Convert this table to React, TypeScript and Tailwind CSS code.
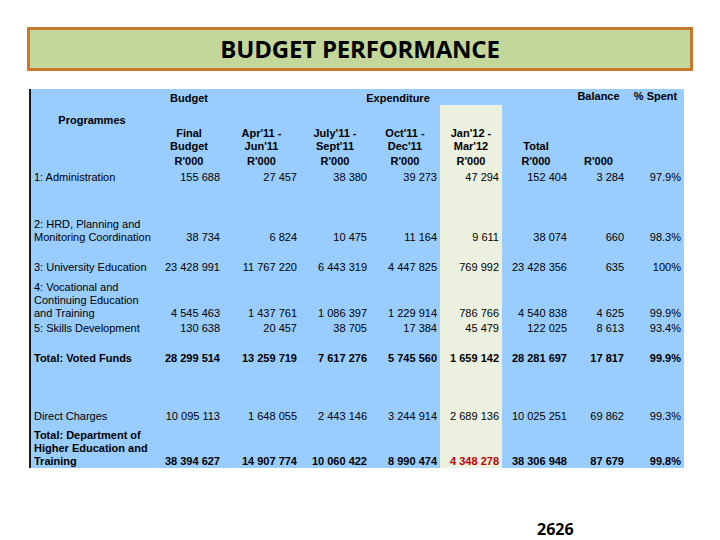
import React from "react";

type Row = {
  label: string[];
  vals: string[];
  pad: string;
  bold?: boolean;
  redCol?: number;
};

const cols = "grid grid-cols-[129px_63px_77px_70px_70px_62px_68px_57px_57px]";

const rows: Row[] = [
  { label: ["1: Administration"], vals: ["155 688", "27 457", "38 380", "39 273", "47 294", "152 404", "3 284", "97.9%"], pad: "pt-[3px]" },
  { label: ["2: HRD, Planning and", "Monitoring Coordination"], vals: ["38 734", "6 824", "10 475", "11 164", "9 611", "38 074", "660", "98.3%"], pad: "pt-[34px]" },
  { label: ["3: University Education"], vals: ["23 428 991", "11 767 220", "6 443 319", "4 447 825", "769 992", "23 428 356", "635", "100%"], pad: "pt-[17px]" },
  { label: ["4: Vocational and", "Continuing Education", "and Training"], vals: ["4 545 463", "1 437 761", "1 086 397", "1 229 914", "786 766", "4 540 838", "4 625", "99.9%"], pad: "pt-[7px]" },
  { label: ["5: Skills Development"], vals: ["130 638", "20 457", "38 705", "17 384", "45 479", "122 025", "8 613", "93.4%"], pad: "pt-[2px]" },
  { label: ["Total: Voted Funds"], vals: ["28 299 514", "13 259 719", "7 617 276", "5 745 560", "1 659 142", "28 281 697", "17 817", "99.9%"], pad: "pt-[17px]", bold: true },
  { label: ["Direct Charges"], vals: ["10 095 113", "1 648 055", "2 443 146", "3 244 914", "2 689 136", "10 025 251", "69 862", "99.3%"], pad: "pt-[45px]" },
  { label: ["Total: Department of", "Higher Education and", "Training"], vals: ["38 394 627", "14 907 774", "10 060 422", "8 990 474", "4 348 278", "38 306 948", "87 679", "99.8%"], pad: "pt-[6px]", bold: true, redCol: 4 },
];

const periods = [
  ["Final", "Budget"],
  ["Apr'11 -", "Jun'11"],
  ["July'11 -", "Sept'11"],
  ["Oct'11 -", "Dec'11"],
  ["Jan'12 -", "Mar'12"],
  ["", "Total"],
  ["", ""],
  ["", ""],
];

function DataRow({ row }: { row: Row }) {
  return (
    <div className={`${cols} ${row.bold ? "font-bold" : ""}`}>
      <div className={`${row.pad} pl-[3px]`}>
        {row.label.map((l, i) => (
          <div key={i}>{l}</div>
        ))}
      </div>
      {row.vals.map((v, i) => (
        <div
          key={i}
          className={`flex flex-col justify-end text-right pr-[3px] ${i === 4 ? "bg-[#ebf1de]" : ""} ${row.redCol === i ? "text-[#c00000]" : ""}`}
        >
          {v}
        </div>
      ))}
    </div>
  );
}

export default function App() {
  return (
    <div className="w-[720px] h-[540px] bg-white overflow-hidden">
      <div className="pt-[27px] pl-[27px]">
        <div className="w-[666px] h-[44px] border-[3px] border-[#c9782f] bg-[#c4d79b] flex items-center justify-center">
          <h1 className="font-['Open_Sans',sans-serif] font-bold text-[24px] leading-none tracking-[-0.2px] text-black">
            BUDGET PERFORMANCE
          </h1>
        </div>
      </div>

      <div className="mt-[18px] ml-[29px] w-[655px] border-l-2 border-[#1a1a1a] bg-[#99ccff] font-['Liberation_Sans',Arial,sans-serif] text-[11px] leading-[13px] text-black">
        {/* group headings */}
        <div className={`${cols} h-[16px] font-bold`}>
          <div />
          <div className="pt-[3px] text-center pr-[5px]">Budget</div>
          <div />
          <div className="col-span-3 pt-[3px] text-center pr-[6px]">Expenditure</div>
          <div />
          <div className="pt-[1px] text-center">Balance</div>
          <div className="pt-[1px] text-center">% Spent</div>
        </div>

        <div className={`${cols} h-[22px] font-bold`}>
          <div className="pt-[9px] text-center pr-[7px]">Programmes</div>
          <div />
          <div />
          <div />
          <div />
          <div className="bg-[#ebf1de]" />
          <div />
          <div />
          <div />
        </div>

        <div className={`${cols} font-bold`}>
          <div />
          {periods.map((p, i) => (
            <div key={i} className={`text-center ${i === 0 ? "pr-[5px]" : ""} ${i === 4 ? "bg-[#ebf1de]" : ""}`}>
              <div className="h-[13px]">{p[0]}</div>
              <div className="h-[13px]">{p[1]}</div>
            </div>
          ))}
        </div>

        <div className={`${cols} font-bold`}>
          <div />
          {["R'000", "R'000", "R'000", "R'000", "R'000", "R'000", "R'000", ""].map((r, i) => (
            <div key={i} className={`pt-[2px] h-[15px] text-center ${i === 0 ? "pr-[5px]" : ""} ${i === 4 ? "bg-[#ebf1de]" : ""}`}>
              {r}
            </div>
          ))}
        </div>

        {rows.map((r, i) => (
          <DataRow key={i} row={r} />
        ))}
      </div>

      <div className="mt-[52px] ml-[537px] font-['Open_Sans',sans-serif] font-bold text-[16px] leading-[18px] text-black">
        2626
      </div>
    </div>
  );
}
